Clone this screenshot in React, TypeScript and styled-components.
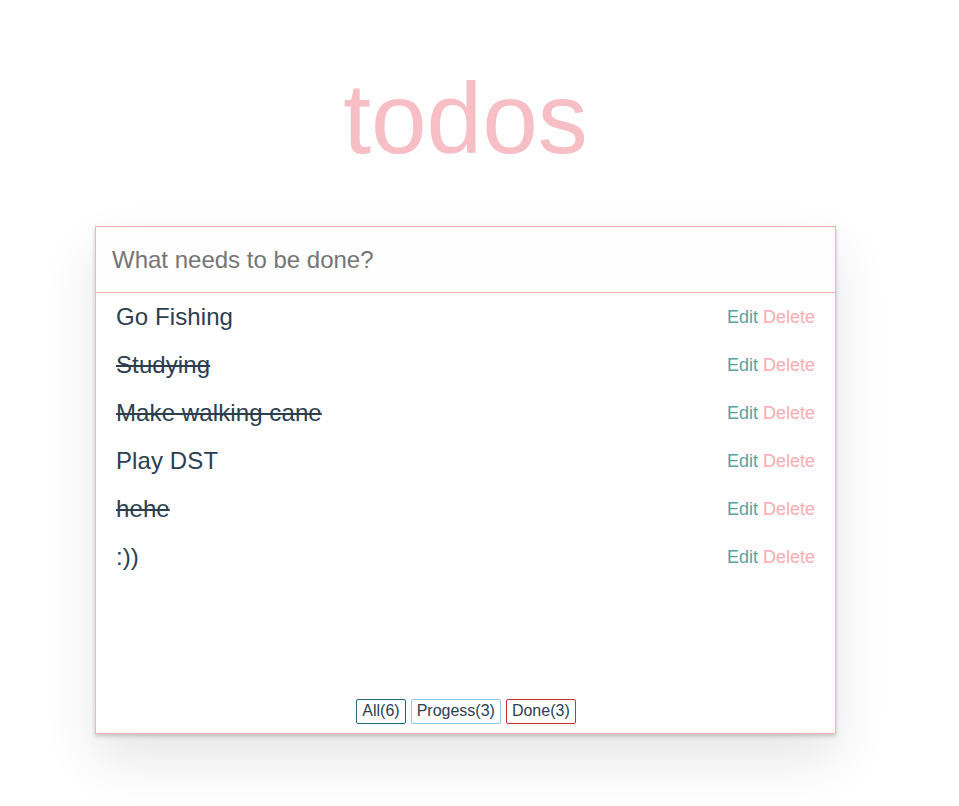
import React, { useState } from "react";
import styled, { createGlobalStyle } from "styled-components";

const GlobalStyle = createGlobalStyle`
  html, body {
    margin: 0;
    padding: 0;
    background: #ffffff;
    font-family: "Liberation Sans", Arial, sans-serif;
    overflow: hidden;
  }
  * { box-sizing: border-box; }
`;

const Page = styled.div`
  width: 959px;
  min-height: 806px;
  padding: 61px 0 0 95px;
`;

const Column = styled.div`
  width: 741px;
  display: flex;
  flex-direction: column;
  align-items: stretch;
`;

const Title = styled.h1`
  margin: 0;
  font-family: "Liberation Sans", Arial, sans-serif;
  font-size: 100px;
  font-weight: 400;
  line-height: 115px;
  text-align: center;
  color: #f7bec6;
`;

const Card = styled.section`
  margin-top: 50px;
  height: 508px;
  border: 1px solid #ffb2a8;
  background: #ffffff;
  box-shadow: 0 2px 4px 0 rgba(0, 0, 0, 0.2), 0 25px 50px 0 rgba(0, 0, 0, 0.1);
  display: flex;
  flex-direction: column;
`;

const NewTodo = styled.input`
  height: 66px;
  flex: none;
  width: 100%;
  border: none;
  border-bottom: 1px solid #ffb2a8;
  background: rgba(0, 0, 0, 0.004);
  padding: 0 16px;
  font-family: "Liberation Sans", Arial, sans-serif;
  font-size: 24px;
  color: #2c3e50;
  outline: none;
  &::placeholder {
    color: #757575;
  }
`;

const List = styled.ul`
  list-style: none;
  margin: 0;
  padding: 0;
  flex: 1;
`;

const Row = styled.li`
  height: 48px;
  padding: 0 20px;
  display: flex;
  align-items: center;
  justify-content: space-between;
`;

const Label = styled.span<{ $done: boolean }>`
  font-size: 24px;
  letter-spacing: 0.1px;
  color: #2c3e50;
  text-decoration: ${(p) => (p.$done ? "line-through" : "none")};
  text-decoration-thickness: 2px;
`;

const Actions = styled.div`
  display: flex;
  gap: 5px;
  font-size: 18px;
`;

const ActionLink = styled.span<{ $kind: "edit" | "delete" }>`
  color: ${(p) => (p.$kind === "edit" ? "#5f9ea0" : "#fcabb1")};
  cursor: pointer;
`;

const Footer = styled.div`
  display: flex;
  justify-content: center;
  gap: 5px;
  padding: 0 0 9px 1px;
`;

const FilterButton = styled.button<{ $color: string }>`
  font-family: "Liberation Sans", Arial, sans-serif;
  font-size: 16px;
  line-height: 18px;
  color: #2c3e50;
  background: #ffffff;
  border: 1px solid ${(p) => p.$color};
  border-radius: 2px;
  padding: 2px 5px 3px;
  cursor: pointer;
`;

const todos = [
  { text: "Go Fishing", done: false },
  { text: "Studying", done: true },
  { text: "Make walking cane", done: true },
  { text: "Play DST", done: false },
  { text: "hehe", done: true },
  { text: ":))", done: false },
];

export default function App() {
  const [value, setValue] = useState("");
  const done = todos.filter((t) => t.done).length;
  return (
    <>
      <GlobalStyle />
      <Page>
        <Column>
          <Title>todos</Title>
          <Card>
            <NewTodo
              placeholder="What needs to be done?"
              value={value}
              onChange={(e) => setValue(e.target.value)}
            />
            <List>
              {todos.map((t) => (
                <Row key={t.text}>
                  <Label $done={t.done}>{t.text}</Label>
                  <Actions>
                    <ActionLink $kind="edit">Edit</ActionLink>
                    <ActionLink $kind="delete">Delete</ActionLink>
                  </Actions>
                </Row>
              ))}
            </List>
            <Footer>
              <FilterButton $color="#1f6b73">All({todos.length})</FilterButton>
              <FilterButton $color="#8ccbe0">Progess({todos.length - done})</FilterButton>
              <FilterButton $color="#cf2e38">Done({done})</FilterButton>
            </Footer>
          </Card>
        </Column>
      </Page>
    </>
  );
}
